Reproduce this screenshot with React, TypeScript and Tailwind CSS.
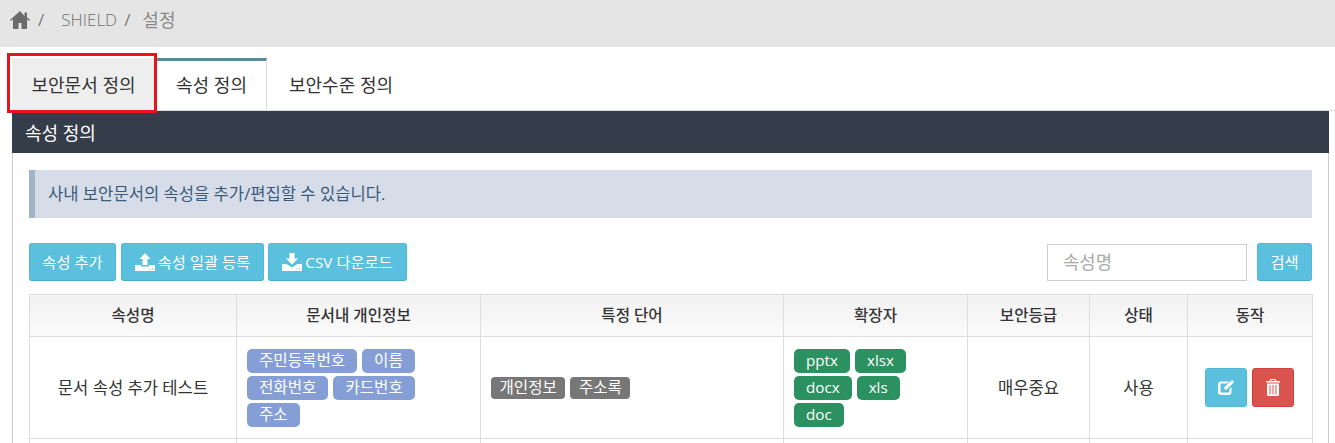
import React from "react";

const font = "font-['Open_Sans','Noto_Sans_CJK_KR',sans-serif]";

function HddUpload() {
  return (
    <svg width="20" height="18" viewBox="0 0 20 18" className="mr-[3px]" aria-hidden>
      <path fill="#fff" d="M10 0l5.500 6H12.500v6h-5V6H4.500z" />
      <path fill="#fff" fillRule="evenodd" d="M0 12h6v1.500h8V12h6v6H0zM14.500 15.500h1v1h-1zM17 15.500h1v1h-1z" />
    </svg>
  );
}

function HddDownload() {
  return (
    <svg width="20" height="18" viewBox="0 0 20 18" className="mr-[3px]" aria-hidden>
      <path fill="#fff" d="M7.500 0h5v5.500h3.500L10 11.500 4 5.500h3.500z" />
      <path fill="#fff" fillRule="evenodd" d="M0 11h4.500l5.500 3.500 5.500-3.500H20v7H0zM14.500 15.500h1v1h-1zM17 15.500h1v1h-1z" />
    </svg>
  );
}

function HomeIcon() {
  return (
    <svg width="20" height="18" viewBox="0 0 20 18" aria-hidden>
      <path fill="#6b6b6b" d="M10 0L0 9l.8 1L3 8.200V18h5.500v-6h3v6H17V8.200l2.200 1.800.8-1-3-2.700V1.500h-2.500v3.500z" />
    </svg>
  );
}

function EditIcon() {
  return (
    <svg width="16" height="15" viewBox="0 0 16 15" aria-hidden>
      <path fill="#fff" d="M3 1.500h8l-2 2H3.500a1 1 0 0 0-1 1v7a1 1 0 0 0 1 1h7a1 1 0 0 0 1-1V9l2-2v5a3 3 0 0 1-3 3H3a3 3 0 0 1-3-3V4.500a3 3 0 0 1 3-3z" />
      <path fill="#fff" d="M12.700 1l2.300 2.300-6.300 6.300H6.400V7.300zM13.500.2l.7-.2 1.800 1.800-.2.700-.6.500L13 .7z" />
    </svg>
  );
}

function TrashIcon() {
  return (
    <svg width="14" height="17" viewBox="0 0 14 17" aria-hidden>
      <path fill="#fff" d="M4.500 0h5l1 2H14v1.500H0V2h3.500zM5.300 1L5 2h4l-.3-1z" />
      <path fill="#fff" fillRule="evenodd" d="M1 4.500h12V16a1 1 0 0 1-1 1H2a1 1 0 0 1-1-1zM3.500 6v9.500h1V6zM6.500 6v9.500h1V6zM9.500 6v9.500h1V6z" />
    </svg>
  );
}

function InfoBtn({ children, className = "" }: { children: React.ReactNode; className?: string }) {
  return (
    <button className={`flex h-[38px] items-center justify-center rounded-[3px] border border-[#52b8d8] border-b-[#46afd0] bg-[#5bc0de] text-[15.300px] text-white ${className}`}>
      {children}
    </button>
  );
}

function Tag({ children, color, size }: { children: React.ReactNode; color: string; size: string }) {
  return <span className={`inline-block h-6 rounded-[5px] px-3 leading-[23px] text-white ${size} ${color}`}>{children}</span>;
}

function Th({ children, w }: { children: React.ReactNode; w: string }) {
  return (
    <th className={`${w} border border-[#ddd] bg-gradient-to-b from-[#f2f2f2] to-[#fafafa] text-center text-[15.600px] font-medium text-[#333]`}>
      {children}
    </th>
  );
}

function Td({ children, className = "" }: { children: React.ReactNode; className?: string }) {
  return <td className={`border border-[#ddd] text-[16.600px] text-[#333] ${className}`}>{children}</td>;
}

export default function App() {
  return (
    <div className={`h-[443px] w-[1335px] overflow-hidden bg-white ${font}`}>
      <div className="flex h-[47px] items-center bg-[#e5e5e5] pb-[7px] pl-[10px] text-[17px] text-[#8a8a8a]">
        <HomeIcon />
        <span className="ml-[8px] text-[#777]">/</span>
        <span className="ml-[17px] font-light text-[#707070]">SHIELD</span>
        <span className="ml-[7px] text-[#777]">/</span>
        <span className="ml-[12px] text-[18px]">설정</span>
      </div>

      <div className="relative ml-3 mt-[11px] flex h-[53px] items-stretch border-b border-[#ddd] text-[18px] text-[#333]">
        <div className="flex w-[145px] items-center justify-center bg-[#eeeeee] pr-[2px] pt-[2px]">보안문서 정의</div>
        <div className="flex w-[110px] items-center justify-center border-r border-[#ddd] border-t-[3px] border-t-[#5b8a9d] bg-white">속성 정의</div>
        <div className="flex w-[148px] items-center justify-center pt-[2px]">보안수준 정의</div>
        <div className="pointer-events-none absolute left-[-5px] top-[-5px] h-[60px] w-[150px] border-[3px] border-[#e8141c]" />
      </div>

      <div className="ml-3 mr-[6px] h-[332px] border-x border-[#ccc]">
        <div className="-mx-px flex h-[42px] items-center bg-[#353c4a] pl-[13px] pt-[2px] text-[18px] text-white">속성 정의</div>
        <div className="px-4 pt-[17px]">
          <div className="flex h-12 items-center border-l-[6px] border-[#9fb4c7] bg-[#d6dde8] pl-[13px] pt-px text-[16.600px] text-[#3b5a7a]">
            사내 보안문서의 속성을 추가/편집할 수 있습니다.
          </div>

          <div className="mt-[25px] flex items-center">
            <InfoBtn className="w-[87px]">속성 추가</InfoBtn>
            <InfoBtn className="ml-[5px] w-[143px]"><HddUpload />속성 일괄 등록</InfoBtn>
            <InfoBtn className="ml-1 w-[139px]"><HddDownload />CSV 다운로드</InfoBtn>
            <input
              readOnly
              placeholder="속성명"
              className="ml-auto h-[37px] w-[200px] border border-[#ccc] bg-white pl-[15px] text-[17.800px] placeholder:text-[#a9a9a9]"
            />
            <InfoBtn className="ml-[10px] w-[55px]">검색</InfoBtn>
          </div>

          <table className="mt-[13px] w-[1283px] table-fixed border-collapse">
            <thead>
              <tr className="h-[42px]">
                <Th w="w-[207px]">속성명</Th>
                <Th w="w-[244px]">문서내 개인정보</Th>
                <Th w="w-[303px]">특정 단어</Th>
                <Th w="w-[184px]">확장자</Th>
                <Th w="w-[122px]">보안등급</Th>
                <Th w="w-[98px]">상태</Th>
                <Th w="w-[125px]">동작</Th>
              </tr>
            </thead>
            <tbody>
              <tr className="h-[102px]">
                <Td className="pt-px text-center">문서 속성 추가 테스트</Td>
                <Td className="pl-[10px]">
                  <div className="flex w-[180px] flex-wrap gap-x-[5px] gap-y-[3px]">
                    <Tag size="text-[15.600px]" color="bg-[#859fd6]">주민등록번호</Tag>
                    <Tag size="text-[15.600px]" color="bg-[#859fd6]">이름</Tag>
                    <Tag size="text-[15.600px]" color="bg-[#859fd6]">전화번호</Tag>
                    <Tag size="text-[15.600px]" color="bg-[#859fd6]">카드번호</Tag>
                    <Tag size="text-[15.600px]" color="bg-[#859fd6]">주소</Tag>
                  </div>
                </Td>
                <Td className="pl-[10px]">
                  <div className="flex gap-[5px]">
                    <span className="h-[22px] rounded-[4px] bg-[#777] px-[8.500px] text-[15.600px] leading-[21px] text-white">개인정보</span>
                    <span className="h-[22px] rounded-[4px] bg-[#777] px-[8.500px] text-[15.600px] leading-[21px] text-white">주소록</span>
                  </div>
                </Td>
                <Td className="pl-[10px]">
                  <div className="flex w-[120px] flex-wrap gap-x-[5px] gap-y-[3px]">
                    <Tag size="text-[15.200px]" color="bg-[#2b9160]">pptx</Tag>
                    <Tag size="text-[15.200px]" color="bg-[#2b9160]">xlsx</Tag>
                    <Tag size="text-[15.200px]" color="bg-[#2b9160]">docx</Tag>
                    <Tag size="text-[15.200px]" color="bg-[#2b9160]">xls</Tag>
                    <Tag size="text-[15.200px]" color="bg-[#2b9160]">doc</Tag>
                  </div>
                </Td>
                <Td className="pt-px text-center">매우중요</Td>
                <Td className="pt-px text-center">사용</Td>
                <Td>
                  <div className="flex justify-center gap-[5px] pr-[2px]">
                    <button className="flex h-[39px] w-[42px] items-center justify-center rounded-[3px] border border-[#52b8d8] bg-[#5bc0de]"><EditIcon /></button>
                    <button className="flex h-[39px] w-[42px] items-center justify-center rounded-[3px] border border-[#cf3f3b] bg-[#d9534f]"><TrashIcon /></button>
                  </div>
                </Td>
              </tr>
              <tr className="h-[30px]">
                <Td /><Td /><Td /><Td /><Td /><Td /><Td />
              </tr>
            </tbody>
          </table>
        </div>
      </div>
    </div>
  );
}
